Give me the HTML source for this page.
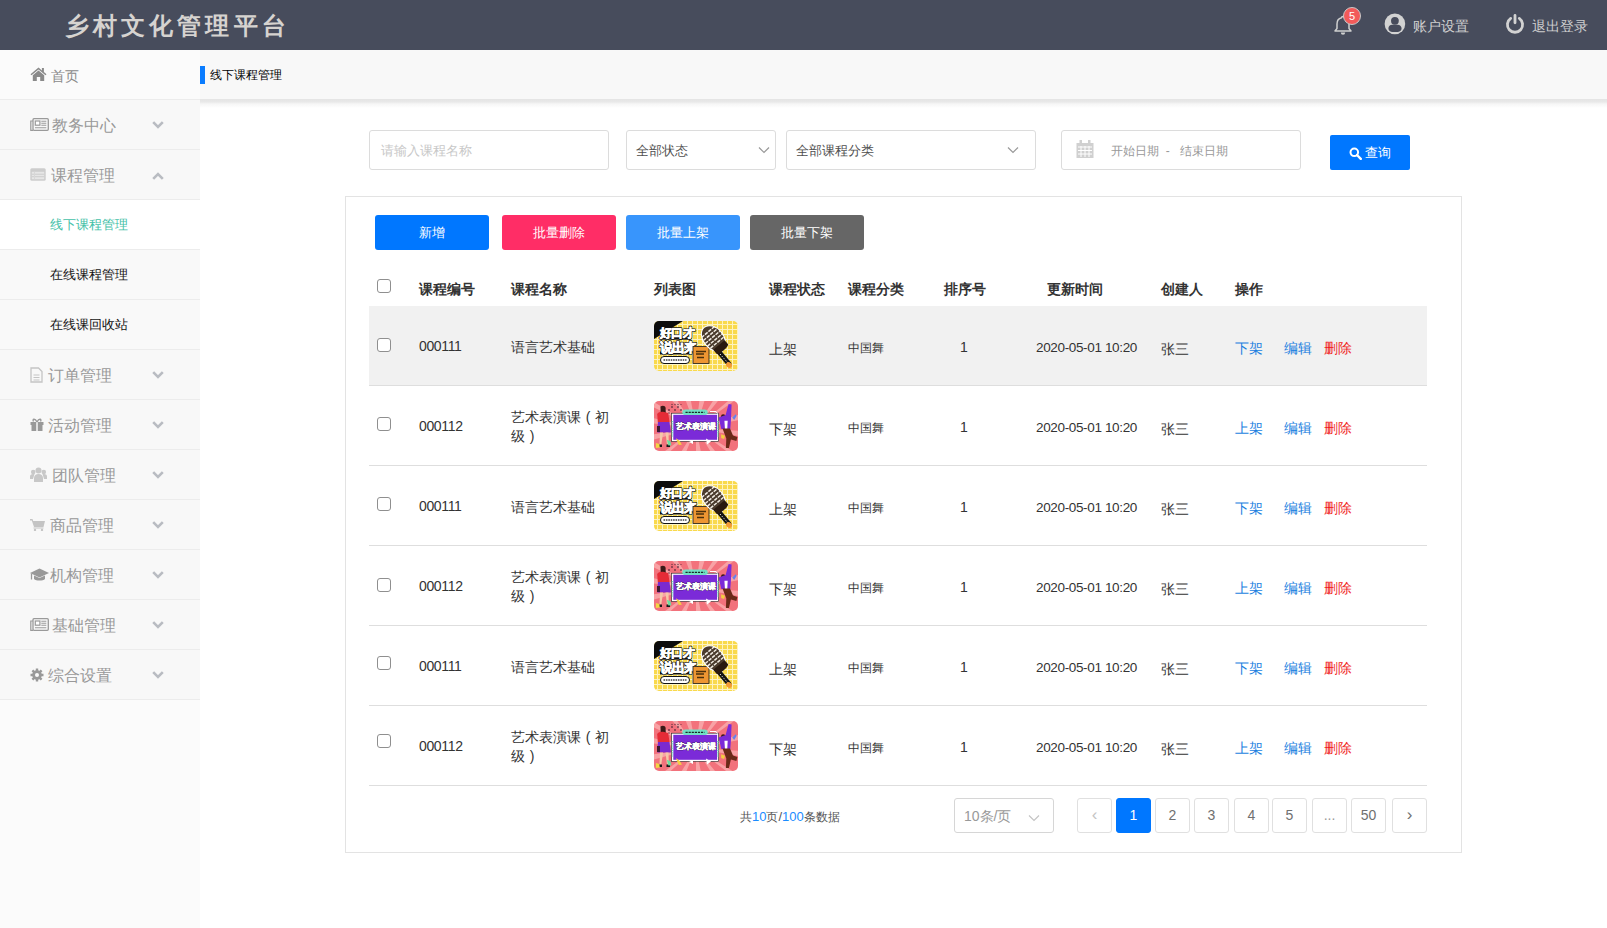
<!DOCTYPE html>
<html><head><meta charset="utf-8">
<style>
*{box-sizing:border-box;margin:0;padding:0}
html,body{width:1607px;height:928px;overflow:hidden;background:#fff;font-family:"Liberation Sans",sans-serif;font-size:13px;color:#333}
.a{position:absolute;white-space:nowrap}
#hdr{position:absolute;left:0;top:0;width:1607px;height:50px;background:#474c5c}
#title{left:65px;top:8px;font-size:24px;font-weight:700;letter-spacing:4.1px;color:#d6d3d0;line-height:36px}
.htx{font-size:14px;color:#cfcfcf;line-height:20px}
#side{position:absolute;left:0;top:50px;width:200px;height:878px;background:#fbfbfb}
.mi{position:absolute;left:0;width:200px;height:50px;border-bottom:1px solid #ececec;color:#999;font-size:16px;background:#f8f8f8}
.mi .t{position:absolute;top:1px;line-height:49px;white-space:nowrap}
.mi svg{position:absolute}
.sub{position:absolute;left:0;width:200px;height:50px;border-bottom:1px solid #ececec;font-size:13px;color:#151515;background:#f9f9f9}
.sub .t{position:absolute;left:50px;top:0;line-height:49px}
#crumb{position:absolute;left:200px;top:50px;width:1407px;height:49px;background:#f8f8f8}
#shd{position:absolute;left:200px;top:99px;width:1407px;height:9px;background:linear-gradient(to bottom,#e4e4e4 0,#e9e9e9 3px,#f6f6f6 5px,#fff 9px)}
.box{position:absolute;border:1px solid #dcdcdc;border-radius:3px;background:#fff}
.btn{position:absolute;top:215px;height:35px;width:114px;border-radius:3px;color:#fff;font-size:13px;font-weight:500;line-height:35px;text-align:center}
#panel{position:absolute;left:345px;top:196px;width:1117px;height:657px;border:1px solid #e3e3e3}
.th{position:absolute;top:279px;font-size:14px;font-weight:bold;color:#333;line-height:20px;white-space:nowrap}
.cb{position:absolute;left:377px;width:14px;height:14px;border:1px solid #8f8f8f;border-radius:3px;background:#fff}
.row{position:absolute;left:369px;width:1058px;height:80px;border-bottom:1px solid #dedede}
.c{position:absolute;white-space:nowrap;line-height:20px}
.pg{position:absolute;top:798px;width:35px;height:35px;border:1px solid #e0e0e0;border-radius:3px;text-align:center;line-height:33px;font-size:14px;color:#707070;background:#fff}
</style></head><body>
<div id="hdr">
  <div id="title" class="a">乡村文化管理平台</div>
  <!-- bell -->
  <svg class="a" style="left:1332px;top:14px" width="22" height="22" viewBox="0 0 22 22"><path d="M11 2.5c-.9 0-1.5.6-1.5 1.3C6.6 4.5 5 7 5 10v4.5L3 17h16l-2-2.5V10c0-3-1.6-5.5-4.5-6.2 0-.7-.6-1.3-1.5-1.3z" fill="none" stroke="#cfcfcf" stroke-width="1.5" stroke-linejoin="round"/><path d="M8.8 18.5a2.2 2.2 0 0 0 4.4 0z" fill="#cfcfcf"/></svg>
  <div class="a" style="left:1343px;top:7px;width:18px;height:18px;border-radius:50%;background:#f25a5a;border:1px solid #c9c9c9;color:#fff;font-size:11px;line-height:16px;text-align:center">5</div>
  <!-- user -->
  <svg class="a" style="left:1384px;top:13px" width="22" height="22" viewBox="0 0 22 22"><circle cx="10.9" cy="10.9" r="10.3" fill="#d2d2d2"/><circle cx="10.9" cy="7.8" r="3.9" fill="#474b5b"/><path d="M4.4 15.5c0-2.2 1.6-3.8 3.8-3.8h5.4c2.2 0 4 1.6 4 3.8v0c0 2.2-2.2 3.4-4 3.4H8.4c-2 0-4-1.2-4-3.4z" fill="#474b5b"/></svg>
  <div class="a htx" style="left:1413px;top:16px">账户设置</div>
  <!-- power -->
  <svg class="a" style="left:1505px;top:13px" width="20" height="21" viewBox="0 0 20 21"><path d="M5.7 5.4A7.6 7.6 0 1 0 14.3 5.4" fill="none" stroke="#d2d2d2" stroke-width="2.8" stroke-linecap="round"/><path d="M10 2.4v7.4" stroke="#d2d2d2" stroke-width="2.8" stroke-linecap="round"/></svg>
  <div class="a htx" style="left:1532px;top:16px">退出登录</div>
</div>

<div id="side">
  <div class="mi" style="top:0;background:#fbfbfb">
    <svg style="left:30px;top:17px" width="17" height="14" viewBox="0 0 17 14"><path d="M8.5 0.5L0.5 7.2l1 1.1L8.5 2.5l7 5.8 1-1.1-2.6-2.2V1h-2v2.5z" fill="#8a8a8a"/><path d="M2.8 8.2L8.5 3.5l5.7 4.7V14h-4V10H6.8v4h-4z" fill="#8a8a8a"/></svg>
    <div class="t" style="left:51px;top:2px;font-size:14px;color:#8a8a8a">首页</div>
  </div>
  <div class="mi" style="top:50px">
    <svg style="left:30px;top:18px" width="19" height="13" viewBox="0 0 19 13"><rect x="3" y="0.7" width="15.3" height="11.6" rx="1" fill="none" stroke="#9a9a9a" stroke-width="1.3"/><path d="M3 3H0.8v9.3H3" fill="none" stroke="#9a9a9a" stroke-width="1.2"/><rect x="5.3" y="3" width="4.6" height="4.2" fill="#fff" stroke="#9a9a9a" stroke-width="1.2"/><path d="M11.3 3.3h5M11.3 5.3h5M11.3 7.3h5M5 9.8h11.3" stroke="#9a9a9a" stroke-width="1.1"/></svg>
    <div class="t" style="left:52px">教务中心</div>
    <svg style="left:152px;top:21px" width="12" height="8" viewBox="0 0 12 8"><path d="M1.2 1.2L6 6l4.8-4.8" fill="none" stroke="#b9bcc2" stroke-width="2.6"/></svg>
  </div>
  <div class="mi" style="top:100px">
    <svg style="left:30px;top:18px" width="16" height="13" viewBox="0 0 16 13"><rect x="0.3" y="0.3" width="15.4" height="12.4" rx="1.5" fill="#cdcdcd"/><rect x="1.8" y="3.8" width="12.4" height="7.4" fill="#e6e6e6"/><path d="M1.8 6.2h12.4M1.8 8.7h12.4" stroke="#cdcdcd" stroke-width="1"/><path d="M4.5 3.8v7.4" stroke="#d8d8d8" stroke-width="1"/></svg>
    <div class="t" style="left:51px">课程管理</div>
    <svg style="left:152px;top:22px" width="12" height="8" viewBox="0 0 12 8"><path d="M1.2 6.8L6 2l4.8 4.8" fill="none" stroke="#b9bcc2" stroke-width="2.6"/></svg>
  </div>
  <div class="sub" style="top:150px;background:#fff"><div class="t" style="color:#45c1a8">线下课程管理</div></div>
  <div class="sub" style="top:200px"><div class="t">在线课程管理</div></div>
  <div class="sub" style="top:250px"><div class="t">在线课回收站</div></div>
  <div class="mi" style="top:300px">
    <svg style="left:30px;top:17px" width="13" height="16" viewBox="0 0 13 16"><path d="M1 1h7.5L12 4.5V15H1z" fill="none" stroke="#c4c4c4" stroke-width="1.3"/><path d="M3.5 8h6M3.5 10.5h6M3.5 13h6" stroke="#c4c4c4" stroke-width="1"/></svg>
    <div class="t" style="left:48px">订单管理</div>
    <svg style="left:152px;top:21px" width="12" height="8" viewBox="0 0 12 8"><path d="M1.2 1.2L6 6l4.8-4.8" fill="none" stroke="#b9bcc2" stroke-width="2.6"/></svg>
  </div>
  <div class="mi" style="top:350px">
    <svg style="left:30px;top:18px" width="14" height="13" viewBox="0 0 14 13"><path d="M0.5 4h13v3H0.5zM1.5 7h11v6h-11z" fill="#999"/><path d="M7 4v9" stroke="#f9f9f9" stroke-width="1.5"/><path d="M7 4C5 0 2 1 3.5 3.5M7 4c2-4 5-3 3.5-0.5" fill="none" stroke="#999" stroke-width="1.4"/></svg>
    <div class="t" style="left:48px">活动管理</div>
    <svg style="left:152px;top:21px" width="12" height="8" viewBox="0 0 12 8"><path d="M1.2 1.2L6 6l4.8-4.8" fill="none" stroke="#b9bcc2" stroke-width="2.6"/></svg>
  </div>
  <div class="mi" style="top:400px">
    <svg style="left:30px;top:17px" width="17" height="15" viewBox="0 0 17 15"><circle cx="8.5" cy="3.5" r="3" fill="#c8c8c8"/><circle cx="3.2" cy="5" r="2.3" fill="#c8c8c8"/><circle cx="13.8" cy="5" r="2.3" fill="#c8c8c8"/><path d="M4 15v-4c0-2.5 2-4 4.5-4s4.5 1.5 4.5 4v4z" fill="#c8c8c8"/><path d="M0 12v-2.5c0-1.5 1-2.5 3-2.5h1.5L3 12zM17 12v-2.5c0-1.5-1-2.5-3-2.5h-1.5L14 12z" fill="#c8c8c8"/></svg>
    <div class="t" style="left:52px">团队管理</div>
    <svg style="left:152px;top:21px" width="12" height="8" viewBox="0 0 12 8"><path d="M1.2 1.2L6 6l4.8-4.8" fill="none" stroke="#b9bcc2" stroke-width="2.6"/></svg>
  </div>
  <div class="mi" style="top:450px">
    <svg style="left:30px;top:18px" width="15" height="13" viewBox="0 0 15 13"><path d="M0 1h2.5l.7 2H15l-1.5 6H4L1.8 2.5H0z" fill="#c4c4c4"/><rect x="3.5" y="9.5" width="10" height="1" fill="#c4c4c4"/><circle cx="5" cy="12" r="1.2" fill="#c4c4c4"/><circle cx="12" cy="12" r="1.2" fill="#c4c4c4"/></svg>
    <div class="t" style="left:50px">商品管理</div>
    <svg style="left:152px;top:21px" width="12" height="8" viewBox="0 0 12 8"><path d="M1.2 1.2L6 6l4.8-4.8" fill="none" stroke="#b9bcc2" stroke-width="2.6"/></svg>
  </div>
  <div class="mi" style="top:500px">
    <svg style="left:30px;top:18px" width="19" height="14" viewBox="0 0 19 14"><path d="M9.5 0.5L0 5l9.5 4.5L19 5z" fill="#999"/><path d="M4 7.5v3.5c2 2 9 2 11 0V7.5L9.5 10z" fill="#999"/><path d="M1.5 5.5v6" stroke="#999" stroke-width="1.3"/></svg>
    <div class="t" style="left:50px">机构管理</div>
    <svg style="left:152px;top:21px" width="12" height="8" viewBox="0 0 12 8"><path d="M1.2 1.2L6 6l4.8-4.8" fill="none" stroke="#b9bcc2" stroke-width="2.6"/></svg>
  </div>
  <div class="mi" style="top:550px">
    <svg style="left:30px;top:18px" width="19" height="13" viewBox="0 0 19 13"><rect x="3" y="0.7" width="15.3" height="11.6" rx="1" fill="none" stroke="#9a9a9a" stroke-width="1.3"/><path d="M3 3H0.8v9.3H3" fill="none" stroke="#9a9a9a" stroke-width="1.2"/><rect x="5.3" y="3" width="4.6" height="4.2" fill="#fff" stroke="#9a9a9a" stroke-width="1.2"/><path d="M11.3 3.3h5M11.3 5.3h5M11.3 7.3h5M5 9.8h11.3" stroke="#9a9a9a" stroke-width="1.1"/></svg>
    <div class="t" style="left:52px">基础管理</div>
    <svg style="left:152px;top:21px" width="12" height="8" viewBox="0 0 12 8"><path d="M1.2 1.2L6 6l4.8-4.8" fill="none" stroke="#b9bcc2" stroke-width="2.6"/></svg>
  </div>
  <div class="mi" style="top:600px">
    <svg style="left:30px;top:18px" width="14" height="14" viewBox="0 0 14 14"><circle cx="7" cy="7" r="4.8" fill="#999"/><path d="M7 0.5v13M0.5 7h13M2.4 2.4l9.2 9.2M11.6 2.4l-9.2 9.2" stroke="#999" stroke-width="2.4"/><circle cx="7" cy="7" r="2" fill="#f9f9f9"/></svg>
    <div class="t" style="left:48px">综合设置</div>
    <svg style="left:152px;top:21px" width="12" height="8" viewBox="0 0 12 8"><path d="M1.2 1.2L6 6l4.8-4.8" fill="none" stroke="#b9bcc2" stroke-width="2.6"/></svg>
  </div>
</div>

<div id="crumb">
  <div class="a" style="left:0;top:16px;width:5px;height:18px;background:#0a7cff"></div>
  <div class="a" style="left:10px;top:15px;font-size:12px;color:#000;line-height:20px">线下课程管理</div>
</div>
<div id="shd"></div>

<!-- search row -->
<div class="box" style="left:369px;top:130px;width:240px;height:40px"><div class="a" style="left:11px;top:10px;font-size:13px;color:#c8c8c8;line-height:20px">请输入课程名称</div></div>
<div class="box" style="left:626px;top:130px;width:150px;height:40px"><div class="a" style="left:9px;top:10px;font-size:13px;color:#505050;line-height:20px">全部状态</div>
  <svg class="a" style="left:131px;top:15px" width="12" height="8" viewBox="0 0 12 8"><path d="M1 1.5l5 5 5-5" fill="none" stroke="#999" stroke-width="1.2"/></svg></div>
<div class="box" style="left:786px;top:130px;width:250px;height:40px"><div class="a" style="left:9px;top:10px;font-size:13px;color:#505050;line-height:20px">全部课程分类</div>
  <svg class="a" style="left:220px;top:15px" width="12" height="8" viewBox="0 0 12 8"><path d="M1 1.5l5 5 5-5" fill="none" stroke="#999" stroke-width="1.2"/></svg></div>
<div class="box" style="left:1061px;top:130px;width:240px;height:40px">
  <svg class="a" style="left:14px;top:9px" width="18" height="18" viewBox="0 0 18 18"><rect x="0.5" y="3" width="17" height="15" fill="#d0d0d0"/><rect x="3.5" y="0" width="2.5" height="4" fill="#d0d0d0"/><rect x="12" y="0" width="2.5" height="4" fill="#d0d0d0"/><path d="M2 7h14M2 10.5h14M2 14h14M5 6v11M9 6v11M13 6v11" stroke="#fff" stroke-width="1"/></svg>
  <div class="a" style="left:49px;top:10px;font-size:12px;color:#999;line-height:20px">开始日期&nbsp;&nbsp;-&nbsp;&nbsp;&nbsp;结束日期</div>
</div>
<div class="a" style="left:1330px;top:135px;width:80px;height:35px;background:#0077ff;border-radius:2px">
  <svg class="a" style="left:19px;top:12px" width="13" height="13" viewBox="0 0 13 13"><circle cx="5.3" cy="5.3" r="3.8" fill="none" stroke="#fff" stroke-width="2"/><path d="M8 8l3.8 3.8" stroke="#fff" stroke-width="2.4" stroke-linecap="round"/></svg>
  <div class="a" style="left:35px;top:8px;font-size:13px;color:#fff;line-height:20px">查询</div>
</div>

<div id="panel"></div>
<div class="btn" style="left:375px;background:#0077ff">新增</div>
<div class="btn" style="left:502px;background:#ff2d66">批量删除</div>
<div class="btn" style="left:626px;background:#3895fc">批量上架</div>
<div class="btn" style="left:750px;background:#666">批量下架</div>

<div class="cb" style="top:279px"></div>
<div class="th" style="left:419px">课程编号</div>
<div class="th" style="left:511px">课程名称</div>
<div class="th" style="left:654px">列表图</div>
<div class="th" style="left:769px">课程状态</div>
<div class="th" style="left:848px">课程分类</div>
<div class="th" style="left:944px">排序号</div>
<div class="th" style="left:1047px">更新时间</div>
<div class="th" style="left:1161px">创建人</div>
<div class="th" style="left:1235px">操作</div>

<!--ROWS-->
<div id="rows">
<svg width="0" height="0" style="position:absolute"><defs><clipPath id="rr"><rect x="0" y="0" width="84" height="50" rx="5"/></clipPath></defs></svg>
<div class="row" style="top:306px;height:80px;background:#f1f1f1"></div>
<div class="cb" style="top:338px"></div>
<div class="c" style="left:419px;top:336px;font-size:14px;letter-spacing:-0.35px">000111</div>
<div class="c" style="left:511px;top:337px;font-size:14px">语言艺术基础</div>
<svg class="a" style="left:654px;top:321px" width="84" height="50" viewBox="0 0 84 50">
<g clip-path="url(#rr)">
<rect width="84" height="50" fill="#f9d94c"/>
<path d="M3.5 0v50M8.5 0v50M13.5 0v50M18.5 0v50M23.5 0v50M28.5 0v50M33.5 0v50M38.5 0v50M43.5 0v50M48.5 0v50M53.5 0v50M58.5 0v50M63.5 0v50M68.5 0v50M73.5 0v50M78.5 0v50M83.5 0v50M0 3.5h84M0 8.5h84M0 13.5h84M0 18.5h84M0 23.5h84M0 28.5h84M0 33.5h84M0 38.5h84M0 43.5h84M0 48.5h84" stroke="#fdf3c0" stroke-width="1"/>
<path d="M0 0h29L0 18z" fill="#0c0c0c"/>
<rect x="6" y="16.5" width="29" height="2.2" fill="#111"/><rect x="6" y="30.5" width="30" height="3" fill="#111"/>
<g font-family="Liberation Sans" font-weight="900" font-size="11.5" fill="#111" stroke="#111" stroke-width="2.2" stroke-linejoin="round">
<text x="5.5" y="16" letter-spacing="-0.5">好口才</text>
<text x="5.5" y="30.5" font-size="12.5" letter-spacing="-1">说出来</text>
</g>
<g font-family="Liberation Sans" font-weight="900" font-size="11.5" fill="#fff" stroke="#fff" stroke-width="0.8" stroke-linejoin="round">
<text x="5.5" y="16" letter-spacing="-0.5">好口才</text>
<text x="5.5" y="30.5" font-size="12.5" letter-spacing="-1">说出来</text>
</g>
<rect x="6.5" y="35.5" width="29" height="7" rx="3.5" fill="#fff" stroke="#111" stroke-width="1"/>
<path d="M9.5 39h23" stroke="#444" stroke-width="1.6" stroke-dasharray="1.6 0.8"/>
<rect x="39" y="25.5" width="16" height="17" fill="#ee9632" stroke="#1a1a1a" stroke-width="0.8"/>
<path d="M42 30.5h10M42 33h8M43 36.5h7" stroke="#4a300c" stroke-width="1.4"/>
<path d="M65 31l10 12" stroke="#141414" stroke-width="5" stroke-linecap="round"/>
<path d="M66 33l8 9" stroke="#eee" stroke-width="0.9" stroke-dasharray="1.4 1.4"/>
<ellipse cx="75" cy="44" rx="3.2" ry="2.6" fill="#f39a35" transform="rotate(40 75 44)"/>
<g transform="rotate(-40 59.5 17.5)">
<ellipse cx="59.5" cy="17.5" rx="10.5" ry="15" fill="#fff"/>
<ellipse cx="59.5" cy="17.5" rx="9.5" ry="14" fill="#4a3a2c"/>
<path d="M51 9h17M50.5 12.5h18M50 16h19M50 19.5h19M51 23h17" stroke="#f2ece4" stroke-width="1.5" stroke-dasharray="3.5 1"/>
<path d="M52 26h15v5.5c-3 2-12 2-15 0z" fill="#2a1a10"/>
</g>
</g>
</svg>
<div class="c" style="left:769px;top:339px;font-size:14px">上架</div>
<div class="c" style="left:848px;top:338px;font-size:12px">中国舞</div>
<div class="c" style="left:960px;top:337px;font-size:14px">1</div>
<div class="c" style="left:1036px;top:338px;font-size:13.5px;letter-spacing:-0.35px">2020-05-01 10:20</div>
<div class="c" style="left:1161px;top:339px;font-size:14px">张三</div>
<div class="c" style="left:1235px;top:338px;font-size:14px;color:#1b7fe0">下架</div>
<div class="c" style="left:1284px;top:338px;font-size:14px;color:#1b7fe0">编辑</div>
<div class="c" style="left:1324px;top:338px;font-size:14px;color:#f01c1c">删除</div>
<div class="row" style="top:386px;height:80px;background:#fff"></div>
<div class="cb" style="top:417px"></div>
<div class="c" style="left:419px;top:416px;font-size:14px;letter-spacing:-0.35px">000112</div>
<div class="c" style="left:511px;top:408px;font-size:14px;line-height:19px">艺术表演课<span style="display:inline-block;width:14px;text-align:center">(</span>初<br>级<span style="display:inline-block;width:14px;text-align:center">)</span></div>
<svg class="a" style="left:654px;top:401px" width="84" height="50" viewBox="0 0 84 50">
<g clip-path="url(#rr)">
<rect width="84" height="50" fill="#f2727c"/>
<g fill="#f8a2a5">
<path d="M42 27L14 -5h6zM42 27L30 -5h6zM42 27L46 -5h6zM42 27L62 -5h6zM42 27L80 -5h7zM42 27L90 12v6zM42 27L90 30v6zM42 27L88 56h-8zM42 27L66 56h-6zM42 27L48 56h-6zM42 27L30 56h-6zM42 27L10 56h-7zM42 27L-5 40v-6zM42 27L-5 22v-6zM42 27L-5 4v-6z"/>
</g>
<g fill="#3a2030" opacity="0.75">
<circle cx="15" cy="9" r="0.9"/><circle cx="18" cy="6" r="0.9"/><circle cx="21" cy="9" r="0.9"/><circle cx="24" cy="6" r="0.9"/><circle cx="27" cy="9" r="0.9"/><circle cx="18" cy="3.5" r="0.7"/><circle cx="21" cy="3.5" r="0.7"/><circle cx="24" cy="3.5" r="0.7"/><circle cx="15" cy="12" r="0.8"/><circle cx="27" cy="3.5" r="0.6"/>
</g>
<rect x="17.6" y="12.2" width="47" height="28.2" fill="#fff" stroke="#222" stroke-width="0.6"/>
<rect x="19.3" y="13.8" width="43.8" height="25" fill="#7b2bd8"/>
<path d="M18.5 20v16M63.8 20v16" stroke="#6fe0c4" stroke-width="1.4" stroke-dasharray="1 0.8"/>
<rect x="28.4" y="8.5" width="25.2" height="5.6" rx="2.8" fill="#70e0c4"/>
<path d="M31.5 11.3h19" stroke="#1a2a2a" stroke-width="1.3" stroke-dasharray="2.2 0.9"/>
<path d="M56 10.5h6l1.5 2" fill="none" stroke="#fff" stroke-width="1"/>
<g font-family="Liberation Sans" font-weight="900" font-size="7.7"><text x="22" y="28.4" fill="#2a1a3a" stroke="#2a1a3a" stroke-width="1.2" stroke-linejoin="round">艺术表演课</text><text x="22" y="28.4" fill="#fff" stroke="#fff" stroke-width="0.55" stroke-linejoin="round">艺术表演课</text></g>
<path d="M52 37.5l5 3-4 3z" fill="#fff"/>
<path d="M35 41l4 -2v4z" fill="#fff"/>
<g>
<path d="M6.4 5.5c2-1.5 5-1 5.2 1.5l.2 5-5 .5z" fill="#3a1a18"/>
<path d="M3.2 13c1-2 4-2.5 7-2l4 1 1.3 9H3.8z" fill="#e52b36"/>
<path d="M3.9 21h11.6l1.4 10.4H3.4z" fill="#7a2ad0"/>
<path d="M3 25l3 0 0 6h-3z" fill="#3a1a30"/>
<path d="M6 31.4l-.5 12h1.8l1.8-12zM11.5 31.4l1.5 12h1.8l-.3-12z" fill="#f4c8a8"/>
<path d="M4.5 43.5h3.5v2.5h-3.5zM12.5 43.5h3.5v2.5h-3.5z" fill="#1a1a1a"/>
<path d="M1.9 42l3.5 1 .4 3.5-3.9.4z" fill="#f4d444"/>
<path d="M12.9 39l3.4 1 1.1 4.3-3 .2z" fill="#6fdca0"/>
<path d="M22 37.2c2 1 4.5 3 5.8 6.5l-3 .2c-1-2-2-4-2.8-6.7z" fill="#f4d040"/>
</g>
<g>
<circle cx="69.2" cy="15.5" r="2.2" fill="#3a1a10"/>
<path d="M64.6 16.5l7-2.5 3-11 3 .5-0.7 16.3-.6 8.2h-9z" fill="#7b2ad8"/>
<path d="M70.4 19.8h3.3l-0.5 9h-2.2z" fill="#fff"/>
<path d="M68.5 27.5h7.5l3 7 4.4 1.5-1 4-5.5-1.5-2 8.5h-3l.4-9.5z" fill="#6a2a18"/>
<path d="M67.2 33.3l3.9 1.5-1 3.1-2.9-1z" fill="#f4d040"/>
<path d="M78.2 16.5l3.5-3.2 1 1.5-2.5 4.2z" fill="#6a80e8"/>
</g>
</g>
</svg>
<div class="c" style="left:769px;top:419px;font-size:14px">下架</div>
<div class="c" style="left:848px;top:418px;font-size:12px">中国舞</div>
<div class="c" style="left:960px;top:417px;font-size:14px">1</div>
<div class="c" style="left:1036px;top:418px;font-size:13.5px;letter-spacing:-0.35px">2020-05-01 10:20</div>
<div class="c" style="left:1161px;top:419px;font-size:14px">张三</div>
<div class="c" style="left:1235px;top:418px;font-size:14px;color:#1b7fe0">上架</div>
<div class="c" style="left:1284px;top:418px;font-size:14px;color:#1b7fe0">编辑</div>
<div class="c" style="left:1324px;top:418px;font-size:14px;color:#f01c1c">删除</div>
<div class="row" style="top:466px;height:80px;background:#fff"></div>
<div class="cb" style="top:497px"></div>
<div class="c" style="left:419px;top:496px;font-size:14px;letter-spacing:-0.35px">000111</div>
<div class="c" style="left:511px;top:497px;font-size:14px">语言艺术基础</div>
<svg class="a" style="left:654px;top:481px" width="84" height="50" viewBox="0 0 84 50">
<g clip-path="url(#rr)">
<rect width="84" height="50" fill="#f9d94c"/>
<path d="M3.5 0v50M8.5 0v50M13.5 0v50M18.5 0v50M23.5 0v50M28.5 0v50M33.5 0v50M38.5 0v50M43.5 0v50M48.5 0v50M53.5 0v50M58.5 0v50M63.5 0v50M68.5 0v50M73.5 0v50M78.5 0v50M83.5 0v50M0 3.5h84M0 8.5h84M0 13.5h84M0 18.5h84M0 23.5h84M0 28.5h84M0 33.5h84M0 38.5h84M0 43.5h84M0 48.5h84" stroke="#fdf3c0" stroke-width="1"/>
<path d="M0 0h29L0 18z" fill="#0c0c0c"/>
<rect x="6" y="16.5" width="29" height="2.2" fill="#111"/><rect x="6" y="30.5" width="30" height="3" fill="#111"/>
<g font-family="Liberation Sans" font-weight="900" font-size="11.5" fill="#111" stroke="#111" stroke-width="2.2" stroke-linejoin="round">
<text x="5.5" y="16" letter-spacing="-0.5">好口才</text>
<text x="5.5" y="30.5" font-size="12.5" letter-spacing="-1">说出来</text>
</g>
<g font-family="Liberation Sans" font-weight="900" font-size="11.5" fill="#fff" stroke="#fff" stroke-width="0.8" stroke-linejoin="round">
<text x="5.5" y="16" letter-spacing="-0.5">好口才</text>
<text x="5.5" y="30.5" font-size="12.5" letter-spacing="-1">说出来</text>
</g>
<rect x="6.5" y="35.5" width="29" height="7" rx="3.5" fill="#fff" stroke="#111" stroke-width="1"/>
<path d="M9.5 39h23" stroke="#444" stroke-width="1.6" stroke-dasharray="1.6 0.8"/>
<rect x="39" y="25.5" width="16" height="17" fill="#ee9632" stroke="#1a1a1a" stroke-width="0.8"/>
<path d="M42 30.5h10M42 33h8M43 36.5h7" stroke="#4a300c" stroke-width="1.4"/>
<path d="M65 31l10 12" stroke="#141414" stroke-width="5" stroke-linecap="round"/>
<path d="M66 33l8 9" stroke="#eee" stroke-width="0.9" stroke-dasharray="1.4 1.4"/>
<ellipse cx="75" cy="44" rx="3.2" ry="2.6" fill="#f39a35" transform="rotate(40 75 44)"/>
<g transform="rotate(-40 59.5 17.5)">
<ellipse cx="59.5" cy="17.5" rx="10.5" ry="15" fill="#fff"/>
<ellipse cx="59.5" cy="17.5" rx="9.5" ry="14" fill="#4a3a2c"/>
<path d="M51 9h17M50.5 12.5h18M50 16h19M50 19.5h19M51 23h17" stroke="#f2ece4" stroke-width="1.5" stroke-dasharray="3.5 1"/>
<path d="M52 26h15v5.5c-3 2-12 2-15 0z" fill="#2a1a10"/>
</g>
</g>
</svg>
<div class="c" style="left:769px;top:499px;font-size:14px">上架</div>
<div class="c" style="left:848px;top:498px;font-size:12px">中国舞</div>
<div class="c" style="left:960px;top:497px;font-size:14px">1</div>
<div class="c" style="left:1036px;top:498px;font-size:13.5px;letter-spacing:-0.35px">2020-05-01 10:20</div>
<div class="c" style="left:1161px;top:499px;font-size:14px">张三</div>
<div class="c" style="left:1235px;top:498px;font-size:14px;color:#1b7fe0">下架</div>
<div class="c" style="left:1284px;top:498px;font-size:14px;color:#1b7fe0">编辑</div>
<div class="c" style="left:1324px;top:498px;font-size:14px;color:#f01c1c">删除</div>
<div class="row" style="top:546px;height:80px;background:#fff"></div>
<div class="cb" style="top:578px"></div>
<div class="c" style="left:419px;top:576px;font-size:14px;letter-spacing:-0.35px">000112</div>
<div class="c" style="left:511px;top:568px;font-size:14px;line-height:19px">艺术表演课<span style="display:inline-block;width:14px;text-align:center">(</span>初<br>级<span style="display:inline-block;width:14px;text-align:center">)</span></div>
<svg class="a" style="left:654px;top:561px" width="84" height="50" viewBox="0 0 84 50">
<g clip-path="url(#rr)">
<rect width="84" height="50" fill="#f2727c"/>
<g fill="#f8a2a5">
<path d="M42 27L14 -5h6zM42 27L30 -5h6zM42 27L46 -5h6zM42 27L62 -5h6zM42 27L80 -5h7zM42 27L90 12v6zM42 27L90 30v6zM42 27L88 56h-8zM42 27L66 56h-6zM42 27L48 56h-6zM42 27L30 56h-6zM42 27L10 56h-7zM42 27L-5 40v-6zM42 27L-5 22v-6zM42 27L-5 4v-6z"/>
</g>
<g fill="#3a2030" opacity="0.75">
<circle cx="15" cy="9" r="0.9"/><circle cx="18" cy="6" r="0.9"/><circle cx="21" cy="9" r="0.9"/><circle cx="24" cy="6" r="0.9"/><circle cx="27" cy="9" r="0.9"/><circle cx="18" cy="3.5" r="0.7"/><circle cx="21" cy="3.5" r="0.7"/><circle cx="24" cy="3.5" r="0.7"/><circle cx="15" cy="12" r="0.8"/><circle cx="27" cy="3.5" r="0.6"/>
</g>
<rect x="17.6" y="12.2" width="47" height="28.2" fill="#fff" stroke="#222" stroke-width="0.6"/>
<rect x="19.3" y="13.8" width="43.8" height="25" fill="#7b2bd8"/>
<path d="M18.5 20v16M63.8 20v16" stroke="#6fe0c4" stroke-width="1.4" stroke-dasharray="1 0.8"/>
<rect x="28.4" y="8.5" width="25.2" height="5.6" rx="2.8" fill="#70e0c4"/>
<path d="M31.5 11.3h19" stroke="#1a2a2a" stroke-width="1.3" stroke-dasharray="2.2 0.9"/>
<path d="M56 10.5h6l1.5 2" fill="none" stroke="#fff" stroke-width="1"/>
<g font-family="Liberation Sans" font-weight="900" font-size="7.7"><text x="22" y="28.4" fill="#2a1a3a" stroke="#2a1a3a" stroke-width="1.2" stroke-linejoin="round">艺术表演课</text><text x="22" y="28.4" fill="#fff" stroke="#fff" stroke-width="0.55" stroke-linejoin="round">艺术表演课</text></g>
<path d="M52 37.5l5 3-4 3z" fill="#fff"/>
<path d="M35 41l4 -2v4z" fill="#fff"/>
<g>
<path d="M6.4 5.5c2-1.5 5-1 5.2 1.5l.2 5-5 .5z" fill="#3a1a18"/>
<path d="M3.2 13c1-2 4-2.5 7-2l4 1 1.3 9H3.8z" fill="#e52b36"/>
<path d="M3.9 21h11.6l1.4 10.4H3.4z" fill="#7a2ad0"/>
<path d="M3 25l3 0 0 6h-3z" fill="#3a1a30"/>
<path d="M6 31.4l-.5 12h1.8l1.8-12zM11.5 31.4l1.5 12h1.8l-.3-12z" fill="#f4c8a8"/>
<path d="M4.5 43.5h3.5v2.5h-3.5zM12.5 43.5h3.5v2.5h-3.5z" fill="#1a1a1a"/>
<path d="M1.9 42l3.5 1 .4 3.5-3.9.4z" fill="#f4d444"/>
<path d="M12.9 39l3.4 1 1.1 4.3-3 .2z" fill="#6fdca0"/>
<path d="M22 37.2c2 1 4.5 3 5.8 6.5l-3 .2c-1-2-2-4-2.8-6.7z" fill="#f4d040"/>
</g>
<g>
<circle cx="69.2" cy="15.5" r="2.2" fill="#3a1a10"/>
<path d="M64.6 16.5l7-2.5 3-11 3 .5-0.7 16.3-.6 8.2h-9z" fill="#7b2ad8"/>
<path d="M70.4 19.8h3.3l-0.5 9h-2.2z" fill="#fff"/>
<path d="M68.5 27.5h7.5l3 7 4.4 1.5-1 4-5.5-1.5-2 8.5h-3l.4-9.5z" fill="#6a2a18"/>
<path d="M67.2 33.3l3.9 1.5-1 3.1-2.9-1z" fill="#f4d040"/>
<path d="M78.2 16.5l3.5-3.2 1 1.5-2.5 4.2z" fill="#6a80e8"/>
</g>
</g>
</svg>
<div class="c" style="left:769px;top:579px;font-size:14px">下架</div>
<div class="c" style="left:848px;top:578px;font-size:12px">中国舞</div>
<div class="c" style="left:960px;top:577px;font-size:14px">1</div>
<div class="c" style="left:1036px;top:578px;font-size:13.5px;letter-spacing:-0.35px">2020-05-01 10:20</div>
<div class="c" style="left:1161px;top:579px;font-size:14px">张三</div>
<div class="c" style="left:1235px;top:578px;font-size:14px;color:#1b7fe0">上架</div>
<div class="c" style="left:1284px;top:578px;font-size:14px;color:#1b7fe0">编辑</div>
<div class="c" style="left:1324px;top:578px;font-size:14px;color:#f01c1c">删除</div>
<div class="row" style="top:626px;height:80px;background:#fff"></div>
<div class="cb" style="top:656px"></div>
<div class="c" style="left:419px;top:656px;font-size:14px;letter-spacing:-0.35px">000111</div>
<div class="c" style="left:511px;top:657px;font-size:14px">语言艺术基础</div>
<svg class="a" style="left:654px;top:641px" width="84" height="50" viewBox="0 0 84 50">
<g clip-path="url(#rr)">
<rect width="84" height="50" fill="#f9d94c"/>
<path d="M3.5 0v50M8.5 0v50M13.5 0v50M18.5 0v50M23.5 0v50M28.5 0v50M33.5 0v50M38.5 0v50M43.5 0v50M48.5 0v50M53.5 0v50M58.5 0v50M63.5 0v50M68.5 0v50M73.5 0v50M78.5 0v50M83.5 0v50M0 3.5h84M0 8.5h84M0 13.5h84M0 18.5h84M0 23.5h84M0 28.5h84M0 33.5h84M0 38.5h84M0 43.5h84M0 48.5h84" stroke="#fdf3c0" stroke-width="1"/>
<path d="M0 0h29L0 18z" fill="#0c0c0c"/>
<rect x="6" y="16.5" width="29" height="2.2" fill="#111"/><rect x="6" y="30.5" width="30" height="3" fill="#111"/>
<g font-family="Liberation Sans" font-weight="900" font-size="11.5" fill="#111" stroke="#111" stroke-width="2.2" stroke-linejoin="round">
<text x="5.5" y="16" letter-spacing="-0.5">好口才</text>
<text x="5.5" y="30.5" font-size="12.5" letter-spacing="-1">说出来</text>
</g>
<g font-family="Liberation Sans" font-weight="900" font-size="11.5" fill="#fff" stroke="#fff" stroke-width="0.8" stroke-linejoin="round">
<text x="5.5" y="16" letter-spacing="-0.5">好口才</text>
<text x="5.5" y="30.5" font-size="12.5" letter-spacing="-1">说出来</text>
</g>
<rect x="6.5" y="35.5" width="29" height="7" rx="3.5" fill="#fff" stroke="#111" stroke-width="1"/>
<path d="M9.5 39h23" stroke="#444" stroke-width="1.6" stroke-dasharray="1.6 0.8"/>
<rect x="39" y="25.5" width="16" height="17" fill="#ee9632" stroke="#1a1a1a" stroke-width="0.8"/>
<path d="M42 30.5h10M42 33h8M43 36.5h7" stroke="#4a300c" stroke-width="1.4"/>
<path d="M65 31l10 12" stroke="#141414" stroke-width="5" stroke-linecap="round"/>
<path d="M66 33l8 9" stroke="#eee" stroke-width="0.9" stroke-dasharray="1.4 1.4"/>
<ellipse cx="75" cy="44" rx="3.2" ry="2.6" fill="#f39a35" transform="rotate(40 75 44)"/>
<g transform="rotate(-40 59.5 17.5)">
<ellipse cx="59.5" cy="17.5" rx="10.5" ry="15" fill="#fff"/>
<ellipse cx="59.5" cy="17.5" rx="9.5" ry="14" fill="#4a3a2c"/>
<path d="M51 9h17M50.5 12.5h18M50 16h19M50 19.5h19M51 23h17" stroke="#f2ece4" stroke-width="1.5" stroke-dasharray="3.5 1"/>
<path d="M52 26h15v5.5c-3 2-12 2-15 0z" fill="#2a1a10"/>
</g>
</g>
</svg>
<div class="c" style="left:769px;top:659px;font-size:14px">上架</div>
<div class="c" style="left:848px;top:658px;font-size:12px">中国舞</div>
<div class="c" style="left:960px;top:657px;font-size:14px">1</div>
<div class="c" style="left:1036px;top:658px;font-size:13.5px;letter-spacing:-0.35px">2020-05-01 10:20</div>
<div class="c" style="left:1161px;top:659px;font-size:14px">张三</div>
<div class="c" style="left:1235px;top:658px;font-size:14px;color:#1b7fe0">下架</div>
<div class="c" style="left:1284px;top:658px;font-size:14px;color:#1b7fe0">编辑</div>
<div class="c" style="left:1324px;top:658px;font-size:14px;color:#f01c1c">删除</div>
<div class="row" style="top:706px;height:80px;background:#fff"></div>
<div class="cb" style="top:734px"></div>
<div class="c" style="left:419px;top:736px;font-size:14px;letter-spacing:-0.35px">000112</div>
<div class="c" style="left:511px;top:728px;font-size:14px;line-height:19px">艺术表演课<span style="display:inline-block;width:14px;text-align:center">(</span>初<br>级<span style="display:inline-block;width:14px;text-align:center">)</span></div>
<svg class="a" style="left:654px;top:721px" width="84" height="50" viewBox="0 0 84 50">
<g clip-path="url(#rr)">
<rect width="84" height="50" fill="#f2727c"/>
<g fill="#f8a2a5">
<path d="M42 27L14 -5h6zM42 27L30 -5h6zM42 27L46 -5h6zM42 27L62 -5h6zM42 27L80 -5h7zM42 27L90 12v6zM42 27L90 30v6zM42 27L88 56h-8zM42 27L66 56h-6zM42 27L48 56h-6zM42 27L30 56h-6zM42 27L10 56h-7zM42 27L-5 40v-6zM42 27L-5 22v-6zM42 27L-5 4v-6z"/>
</g>
<g fill="#3a2030" opacity="0.75">
<circle cx="15" cy="9" r="0.9"/><circle cx="18" cy="6" r="0.9"/><circle cx="21" cy="9" r="0.9"/><circle cx="24" cy="6" r="0.9"/><circle cx="27" cy="9" r="0.9"/><circle cx="18" cy="3.5" r="0.7"/><circle cx="21" cy="3.5" r="0.7"/><circle cx="24" cy="3.5" r="0.7"/><circle cx="15" cy="12" r="0.8"/><circle cx="27" cy="3.5" r="0.6"/>
</g>
<rect x="17.6" y="12.2" width="47" height="28.2" fill="#fff" stroke="#222" stroke-width="0.6"/>
<rect x="19.3" y="13.8" width="43.8" height="25" fill="#7b2bd8"/>
<path d="M18.5 20v16M63.8 20v16" stroke="#6fe0c4" stroke-width="1.4" stroke-dasharray="1 0.8"/>
<rect x="28.4" y="8.5" width="25.2" height="5.6" rx="2.8" fill="#70e0c4"/>
<path d="M31.5 11.3h19" stroke="#1a2a2a" stroke-width="1.3" stroke-dasharray="2.2 0.9"/>
<path d="M56 10.5h6l1.5 2" fill="none" stroke="#fff" stroke-width="1"/>
<g font-family="Liberation Sans" font-weight="900" font-size="7.7"><text x="22" y="28.4" fill="#2a1a3a" stroke="#2a1a3a" stroke-width="1.2" stroke-linejoin="round">艺术表演课</text><text x="22" y="28.4" fill="#fff" stroke="#fff" stroke-width="0.55" stroke-linejoin="round">艺术表演课</text></g>
<path d="M52 37.5l5 3-4 3z" fill="#fff"/>
<path d="M35 41l4 -2v4z" fill="#fff"/>
<g>
<path d="M6.4 5.5c2-1.5 5-1 5.2 1.5l.2 5-5 .5z" fill="#3a1a18"/>
<path d="M3.2 13c1-2 4-2.5 7-2l4 1 1.3 9H3.8z" fill="#e52b36"/>
<path d="M3.9 21h11.6l1.4 10.4H3.4z" fill="#7a2ad0"/>
<path d="M3 25l3 0 0 6h-3z" fill="#3a1a30"/>
<path d="M6 31.4l-.5 12h1.8l1.8-12zM11.5 31.4l1.5 12h1.8l-.3-12z" fill="#f4c8a8"/>
<path d="M4.5 43.5h3.5v2.5h-3.5zM12.5 43.5h3.5v2.5h-3.5z" fill="#1a1a1a"/>
<path d="M1.9 42l3.5 1 .4 3.5-3.9.4z" fill="#f4d444"/>
<path d="M12.9 39l3.4 1 1.1 4.3-3 .2z" fill="#6fdca0"/>
<path d="M22 37.2c2 1 4.5 3 5.8 6.5l-3 .2c-1-2-2-4-2.8-6.7z" fill="#f4d040"/>
</g>
<g>
<circle cx="69.2" cy="15.5" r="2.2" fill="#3a1a10"/>
<path d="M64.6 16.5l7-2.5 3-11 3 .5-0.7 16.3-.6 8.2h-9z" fill="#7b2ad8"/>
<path d="M70.4 19.8h3.3l-0.5 9h-2.2z" fill="#fff"/>
<path d="M68.5 27.5h7.5l3 7 4.4 1.5-1 4-5.5-1.5-2 8.5h-3l.4-9.5z" fill="#6a2a18"/>
<path d="M67.2 33.3l3.9 1.5-1 3.1-2.9-1z" fill="#f4d040"/>
<path d="M78.2 16.5l3.5-3.2 1 1.5-2.5 4.2z" fill="#6a80e8"/>
</g>
</g>
</svg>
<div class="c" style="left:769px;top:739px;font-size:14px">下架</div>
<div class="c" style="left:848px;top:738px;font-size:12px">中国舞</div>
<div class="c" style="left:960px;top:737px;font-size:14px">1</div>
<div class="c" style="left:1036px;top:738px;font-size:13.5px;letter-spacing:-0.35px">2020-05-01 10:20</div>
<div class="c" style="left:1161px;top:739px;font-size:14px">张三</div>
<div class="c" style="left:1235px;top:738px;font-size:14px;color:#1b7fe0">上架</div>
<div class="c" style="left:1284px;top:738px;font-size:14px;color:#1b7fe0">编辑</div>
<div class="c" style="left:1324px;top:738px;font-size:14px;color:#f01c1c">删除</div>
</div>
<!--/ROWS-->
<!--PAG-->
<div class="a" style="left:740px;top:807px;font-size:12px;color:#555;line-height:20px">共<span style="color:#1a8cff;font-size:13px">10</span>页<span style="font-size:13px">/</span><span style="color:#1a8cff;font-size:13px">100</span>条数据</div>
<div class="box" style="left:954px;top:798px;width:100px;height:35px;border-color:#d6d6d6"><div class="a" style="left:9px;top:7px;font-size:14px;color:#999;line-height:20px">10条/页</div>
<svg class="a" style="left:73px;top:15px" width="12" height="8" viewBox="0 0 12 8"><path d="M1 1.5l5 5 5-5" fill="none" stroke="#c4c4c4" stroke-width="1.2"/></svg></div>
<div class="pg" style="left:1077px;color:#c4c4c4;font-size:17px;line-height:31px">&#8249;</div>
<div class="pg" style="left:1116px;background:#0077ff;border-color:#0077ff;color:#fff">1</div>
<div class="pg" style="left:1155px">2</div>
<div class="pg" style="left:1194px">3</div>
<div class="pg" style="left:1234px">4</div>
<div class="pg" style="left:1272px">5</div>
<div class="pg" style="left:1312px;color:#999">...</div>
<div class="pg" style="left:1351px">50</div>
<div class="pg" style="left:1392px;font-size:17px;line-height:31px">&#8250;</div>
<!--/PAG-->
</body></html>
